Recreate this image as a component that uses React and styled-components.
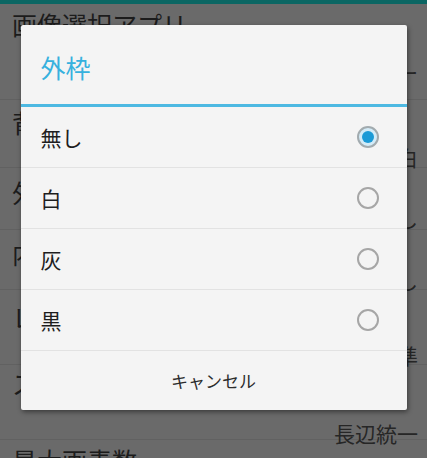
import React, { useState } from 'react'
import styled, { createGlobalStyle } from 'styled-components'

const GlobalStyle = createGlobalStyle`
  html, body {
    margin: 0;
    padding: 0;
  }
  body {
    font-family: 'Noto Sans CJK JP', Roboto, 'Noto Sans', sans-serif;
  }
`

const prefs = [
  { title: '画像選択アプリ', summary: 'ギャラリー', h: 96, pt: 7, gap: 23 },
  { title: '背景色', summary: '白', h: 68, pt: 9, gap: 10 },
  { title: '外枠', summary: '無し', h: 62, pt: 11, gap: 1 },
  { title: '内枠', summary: '無し', h: 60, pt: 10, gap: 2 },
  { title: 'レイアウト', summary: '標準', h: 75, pt: 14, gap: 13 },
  { title: 'スケーリング', summary: '長辺統一', h: 75, pt: 5, gap: 25 },
  { title: '最大画素数', summary: '', h: 60, pt: 7, gap: 0 },
]

const options = ['無し', '白', '灰', '黒']

const App = () => {
  const [selected, setSelected] = useState(0)
  return (
    <Screen>
      <GlobalStyle />
      <TopBar />
      <PrefList>
        {prefs.map((p, i) => (
          <PrefRow key={i} h={p.h} pt={p.pt}>
            <PrefTitle>{p.title}</PrefTitle>
            {p.summary && <PrefSummary gap={p.gap}>{p.summary}</PrefSummary>}
          </PrefRow>
        ))}
      </PrefList>
      <Scrim>
        <Dialog>
          <Header>
            <Title>外枠</Title>
          </Header>
          <Rule />
          {options.map((o, i) => (
            <Option key={o} onClick={() => setSelected(i)}>
              <OptionLabel>{o}</OptionLabel>
              <Radio checked={selected === i} />
            </Option>
          ))}
          <ButtonBar>
            <CancelButton>キャンセル</CancelButton>
          </ButtonBar>
        </Dialog>
      </Scrim>
    </Screen>
  )
}

export default App

const Screen = styled.div`
  position: relative;
  width: 100%;
  height: 100vh;
  overflow: hidden;
  background: #6a6a6a;
`

const TopBar = styled.div`
  height: 4px;
  background: #0b6663;
`

const PrefList = styled.div`
  display: flex;
  flex-direction: column;
`

const PrefRow = styled.div`
  box-sizing: border-box;
  height: ${(props) => props.h}px;
  padding: ${(props) => props.pt}px 9px 0 12px;
  border-bottom: 1px solid #616161;
  display: flex;
  flex-direction: column;
  color: #1c1c1c;
`

const PrefTitle = styled.div`
  font-size: 25px;
  line-height: 26px;
  white-space: nowrap;
`

const PrefSummary = styled.div`
  margin-top: ${(props) => props.gap}px;
  font-size: 21px;
  line-height: 24px;
  text-align: right;
  color: #262626;
`

const Scrim = styled.div`
  position: absolute;
  inset: 0;
  display: flex;
  justify-content: center;
  align-items: flex-start;
  padding-top: 25px;
`

const Dialog = styled.div`
  width: 386px;
  background: #f4f4f4;
  border-radius: 2px;
  box-shadow: 1px 2px 5px rgba(0, 0, 0, 0.45);
  display: flex;
  flex-direction: column;
`

const Header = styled.div`
  box-sizing: border-box;
  height: 79px;
  padding: 4px 20px 0;
  display: flex;
  align-items: center;
`

const Title = styled.div`
  font-size: 25px;
  color: #36b1de;
  line-height: 30px;
`

const Rule = styled.div`
  height: 3px;
  background: #4db9e2;
`

const Option = styled.div`
  box-sizing: border-box;
  height: 61px;
  padding: 0 28px 0 20px;
  border-bottom: 1px solid #e2e2e2;
  display: flex;
  align-items: center;
  justify-content: space-between;
  cursor: pointer;
`

const OptionLabel = styled.span`
  font-size: 21px;
  color: #1e1e1e;
`

const Radio = styled.span`
  position: relative;
  box-sizing: border-box;
  width: 22px;
  height: 22px;
  border-radius: 50%;
  border: 2px solid ${(props) => (props.checked ? '#a2abaf' : '#a6a6a6')};
  background: ${(props) => (props.checked ? '#d3ebf7' : 'transparent')};

  &::after {
    content: '';
    display: ${(props) => (props.checked ? 'block' : 'none')};
    position: absolute;
    left: 50%;
    top: 50%;
    width: 12px;
    height: 12px;
    margin: -6px 0 0 -6px;
    border-radius: 50%;
    background: #1b9ad6;
  }
`

const ButtonBar = styled.div`
  height: 59px;
  display: flex;
  align-items: center;
  justify-content: center;
`

const CancelButton = styled.button`
  border: none;
  background: none;
  font-family: inherit;
  font-size: 17px;
  color: #2c2c2c;
  padding: 0;
`
